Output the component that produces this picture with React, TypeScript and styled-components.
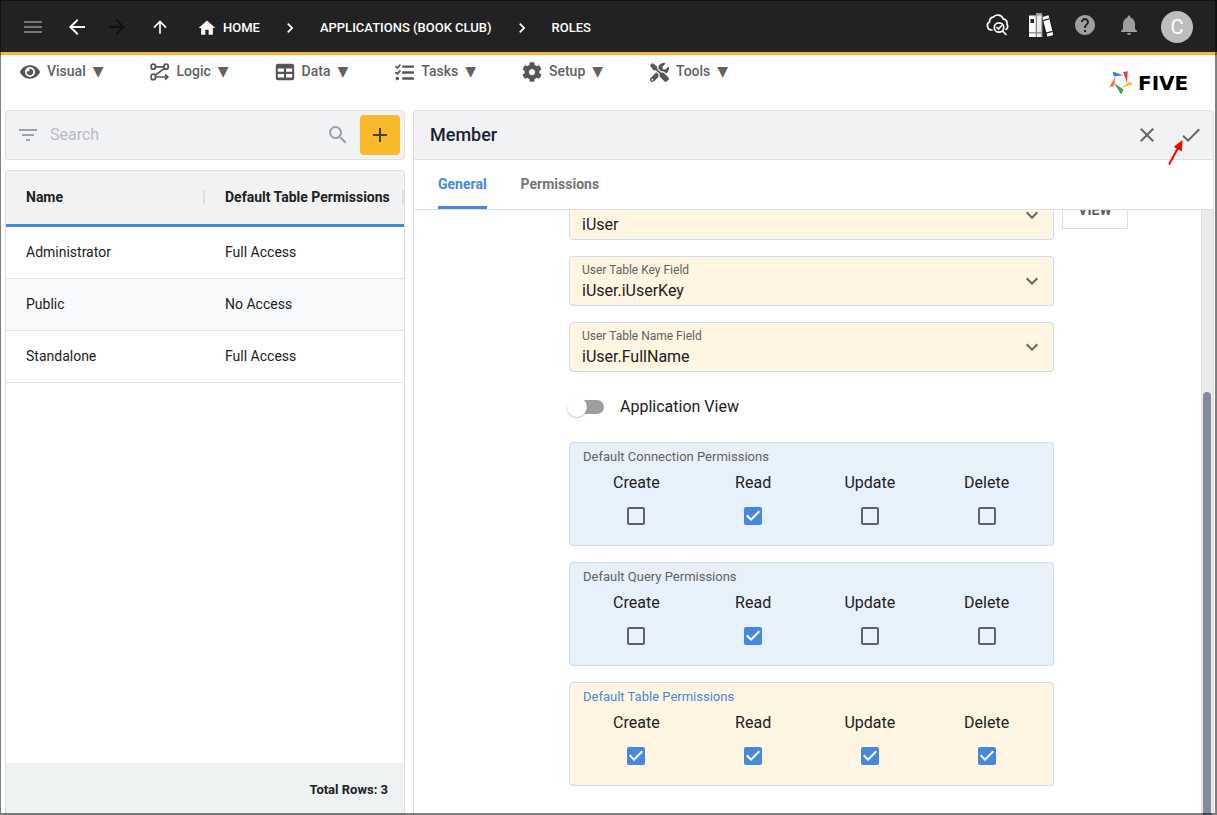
import React, { useId, useState } from "react";
import styled, { createGlobalStyle } from "styled-components";
import {
  MdAdd,
  MdArrowBack,
  MdArrowForward,
  MdArrowUpward,
  MdCheck,
  MdChevronRight,
  MdClose,
  MdExpandMore,
  MdFilterList,
  MdHelp,
  MdHome,
  MdMenu,
  MdNotifications,
  MdSearch,
} from "react-icons/md";
import { FaCog, FaEye, FaTasks, FaTools } from "react-icons/fa";

const color = {
  ink: "#212121",
  muted: "#616161",
  line: "#dcdee0",
  panel: "#f1f2f4",
  blue: "#4689dc",
  amber: "#f8b92b",
  cream: "#fff5e3",
  sky: "#e7f1fc",
  fieldLine: "#cbdcea",
};

const GlobalStyle = createGlobalStyle`
  *, *::before, *::after { box-sizing: border-box; }
  body {
    margin: 0;
    background: #fff;
    color: ${color.ink};
    font-family: Roboto, "Liberation Sans", sans-serif;
    font-size: 14px;
  }
  button, input, select { font: inherit; color: inherit; }
  svg { display: block; flex: none; }
`;

const Page = styled.div`
  position: relative;
  display: flex;
  flex-direction: column;
  height: 100vh;
  overflow: hidden;
`;

const Frame = styled.div`
  position: absolute;
  inset: 0;
  border: solid rgba(0, 0, 0, 0.5);
  border-width: 1px 2px 2px 1px;
  pointer-events: none;
`;

const TopBar = styled.header`
  display: flex;
  align-items: center;
  justify-content: space-between;
  flex: none;
  height: 55px;
  padding: 1px 24px 0 21px;
  background: #222;
  border-bottom: 3px solid ${color.amber};
  color: #fff;
`;

const TopGroup = styled.div`
  display: flex;
  align-items: center;
`;

const IconButton = styled.button<{ $tone?: string }>`
  display: flex;
  align-items: center;
  justify-content: center;
  width: 24px;
  height: 32px;
  padding: 0;
  border: 0;
  background: none;
  color: ${(p) => p.$tone ?? "inherit"};
  cursor: pointer;
`;

const HistoryButtons = styled.div`
  display: flex;
  gap: 16px;
  margin-left: 20px;
`;

const UpButton = styled(IconButton)`
  margin-left: 19px;
`;

const Crumbs = styled.nav`
  display: flex;
  align-items: center;
  margin-left: 25px;
  padding-top: 2px;
`;

const Crumb = styled.a`
  display: flex;
  align-items: center;
  gap: 6px;
  color: #fff;
  font-size: 13px;
  font-weight: 500;
  line-height: 20px;
  text-decoration: none;
  white-space: nowrap;
`;

const CrumbGap = styled.span`
  display: flex;
  justify-content: center;
  width: 60px;
`;

const Utilities = styled.div`
  display: flex;
  align-items: center;
  gap: 20px;
  padding-bottom: 4px;
`;

const Avatar = styled.button`
  width: 32px;
  height: 32px;
  margin-left: 20px;
  padding: 0;
  border: 0;
  border-radius: 50%;
  background: #bdbdbd;
  color: #fff;
  font-size: 20px;
  line-height: 32px;
`;

const MenuBar = styled.div`
  display: flex;
  justify-content: space-between;
  flex: none;
  height: 55px;
  padding: 0 20px;
`;

const Menus = styled.nav`
  display: flex;
  align-items: flex-start;
  gap: 46px;
`;

const MenuButton = styled.button`
  display: flex;
  align-items: center;
  gap: 7px;
  height: 34px;
  padding: 0;
  border: 0;
  background: none;
  color: ${color.muted};
  font-weight: 500;
  white-space: nowrap;
`;

const MenuLabel = styled.span`
  padding-bottom: 2px;
`;

const MenuCaret = styled.span`
  padding-bottom: 2px;
  font-family: "DejaVu Sans", sans-serif;
`;

const MenuIcon = styled.span`
  display: flex;
  justify-content: center;
  width: 20px;
  color: #555;
`;

const Brand = styled.a`
  display: flex;
  align-items: center;
  gap: 4px;
  width: 88px;
  height: 55px;
  color: #000;
  font-family: "DejaVu Sans", sans-serif;
  font-size: 20px;
  font-weight: 700;
  text-decoration: none;
`;

const Workspace = styled.main`
  display: flex;
  flex: 1;
  gap: 8px;
  min-height: 0;
  padding: 0 3px 0 5px;
`;

const ListPane = styled.section`
  display: flex;
  flex-direction: column;
  flex: 0 1 400px;
  gap: 10px;
`;

const SearchBar = styled.div`
  display: flex;
  align-items: center;
  height: 50px;
  padding: 0 4px 0 10px;
  border: 1px solid ${color.line};
  border-radius: 4px;
  background: ${color.panel};
`;

const SearchInput = styled.input`
  flex: 1;
  min-width: 0;
  margin: 0 10px;
  padding: 0 0 2px;
  border: 0;
  outline: 0;
  background: none;
  font-size: 16px;
  &::placeholder { color: #b9bcbf; opacity: 1; }
`;

const AddButton = styled.button`
  display: flex;
  align-items: center;
  justify-content: center;
  width: 40px;
  height: 40px;
  margin-left: 10px;
  padding: 0;
  border: 0;
  border-radius: 4px;
  background: ${color.amber};
  color: #424242;
`;

const TableCard = styled.div`
  display: flex;
  flex-direction: column;
  justify-content: space-between;
  flex: 1;
  overflow: hidden;
  border: 1px solid ${color.line};
  border-bottom: 0;
  border-radius: 4px 4px 0 0;
`;

const RoleTable = styled.table`
  width: 100%;
  table-layout: fixed;
  border-collapse: separate;
  border-spacing: 0;
`;

const HeadCell = styled.th`
  height: 56px;
  padding: 0 0 2px 20px;
  border-bottom: 3px solid ${color.blue};
  background: ${color.panel};
  font-weight: 700;
  text-align: left;
  white-space: nowrap;
`;

const HeadContent = styled.div`
  display: flex;
  align-items: center;
  justify-content: space-between;
  height: 14px;
  border-right: 2px solid ${color.line};
`;

const Row = styled.tr`
  &:nth-child(even) { background: #f8f9fb; }
`;

const Cell = styled.td`
  height: 52px;
  padding: 0 20px 2px;
  border-bottom: 1px solid #e4e5e7;
`;

const TableFooter = styled.div`
  height: 52px;
  padding: 1px 16px 0 0;
  background: #eff2f3;
  font-size: 13px;
  font-weight: 700;
  line-height: 52px;
  text-align: right;
`;

const DetailPane = styled.section`
  display: flex;
  flex-direction: column;
  flex: 1;
  min-width: 0;
  overflow: hidden;
  border: 1px solid ${color.line};
  border-bottom: 0;
  border-radius: 4px 4px 0 0;
`;

const DetailHeader = styled.div`
  display: flex;
  align-items: center;
  justify-content: space-between;
  flex: none;
  height: 49px;
  padding: 0 10px 0 16px;
  border-bottom: 1px solid ${color.line};
  background: ${color.panel};
`;

const DetailTitle = styled.h1`
  margin: 0;
  padding-bottom: 2px;
  color: #1b2230;
  font-size: 18px;
  font-weight: 500;
`;

const DetailActions = styled.div`
  position: relative;
  display: flex;
  gap: 20px;
`;

const Pointer = styled.svg`
  position: absolute;
  top: 19px;
  right: 18px;
`;

const Tabs = styled.div`
  display: flex;
  flex: none;
  gap: 34px;
  height: 50px;
  padding: 0 24px;
  border-bottom: 1px solid ${color.line};
`;

const Tab = styled.button<{ $active?: boolean }>`
  padding: 1px 0 0;
  border: 0;
  border-bottom: 3px solid ${(p) => (p.$active ? color.blue : "transparent")};
  border-radius: 2px 2px 0 0;
  background: none;
  color: ${(p) => (p.$active ? color.blue : "#757575")};
  font-weight: 700;
`;

const DetailBody = styled.div`
  display: flex;
  flex: 1;
  min-height: 0;
`;

/* Reversed column keeps the view anchored to the end of the form. */
const FormScroller = styled.div`
  display: flex;
  flex-direction: column-reverse;
  flex: 1;
  overflow-y: auto;
  scrollbar-width: none;
`;

const Form = styled.form`
  display: flex;
  flex-direction: column;
  gap: 16px;
  padding-bottom: 29px;
`;

const FormRow = styled.div`
  display: grid;
  grid-template-columns: minmax(66px, 1fr) minmax(0, 485px) minmax(66px, 1fr);
  column-gap: 8px;
  padding-left: 8px;
  & > :first-child { grid-column: 2; }
`;

const Field = styled.label`
  position: relative;
  display: flex;
  flex-direction: column;
  height: 50px;
  padding: 5px 12px 0;
  border: 1px solid ${color.fieldLine};
  border-radius: 4px;
  background: ${color.cream};
`;

const FieldLabel = styled.span`
  color: ${color.muted};
  font-size: 12px;
  line-height: 16px;
`;

const FieldSelect = styled.select`
  width: 100%;
  height: 24px;
  padding: 0;
  border: 0;
  outline: 0;
  appearance: none;
  background: none;
  font-size: 16px;
`;

const FieldArrow = styled(MdExpandMore)`
  position: absolute;
  top: 12px;
  right: 9px;
  color: #666;
  pointer-events: none;
`;

const ViewButton = styled.button`
  align-self: start;
  justify-self: start;
  width: 66px;
  height: 39px;
  padding: 0;
  border: 1px solid ${color.line};
  background: #fff;
  color: ${color.muted};
  font-size: 14px;
  font-weight: 700;
`;

const SwitchRow = styled.label`
  display: flex;
  align-items: center;
  gap: 16px;
  height: 38px;
  font-size: 16px;
`;

const SwitchText = styled.span`
  padding-bottom: 2px;
`;

const Switch = styled.input`
  appearance: none;
  display: flex;
  align-items: center;
  width: 34px;
  height: 14px;
  margin: 0 0 0 1px;
  border-radius: 7px;
  background: #9e9e9e;
  &::before {
    content: "";
    width: 20px;
    height: 20px;
    margin-left: -3px;
    flex: none;
    border-radius: 50%;
    background: #fff;
    box-shadow: 0 1px 2px rgba(0, 0, 0, 0.25);
  }
  &:checked { background: #a2c4ed; }
  &:checked::before { margin-left: 17px; background: ${color.blue}; }
`;

const PermissionBox = styled.div<{ $active?: boolean }>`
  height: 104px;
  padding: 5px 8px 0;
  border: 1px solid ${color.fieldLine};
  border-radius: 4px;
  background: ${(p) => (p.$active ? color.cream : color.sky)};
`;

const PermissionTitle = styled.div<{ $active?: boolean }>`
  padding-left: 5px;
  color: ${(p) => (p.$active ? color.blue : color.muted)};
  font-size: 13px;
  line-height: 18px;
`;

const PermissionGrid = styled.div`
  display: grid;
  grid-template-columns: repeat(4, 1fr);
`;

const PermissionItem = styled.label`
  display: flex;
  flex-direction: column;
  align-items: center;
  gap: 12px;
  padding-top: 5px;
  font-size: 16px;
  line-height: 24px;
`;

const CheckSlot = styled.span`
  display: grid;
  & > * { grid-area: 1 / 1; }
  & > svg { pointer-events: none; visibility: hidden; }
  & > input:checked + svg { visibility: visible; }
`;

const CheckInput = styled.input`
  appearance: none;
  width: 18px;
  height: 18px;
  margin: 0;
  border: 2px solid ${color.muted};
  border-radius: 2px;
  &:checked { border-color: ${color.blue}; background: ${color.blue}; }
`;

const ScrollTrack = styled.div`
  display: flex;
  flex-direction: column;
  justify-content: flex-end;
  flex: none;
  width: 12px;
  padding: 0 2px 0 1px;
  border-left: 1px solid ${color.line};
  background: #ebebeb;
`;

const ScrollThumb = styled.div`
  height: 70%;
  border-radius: 4px 4px 0 0;
  background: #828a9b;
`;

const LogicIcon = () => (
  <svg width="20" height="18" viewBox="0 0 20 18" fill="none" stroke="currentColor" strokeWidth="1.7">
    <rect x="1.2" y="1.2" width="4.2" height="5" rx="2" />
    <rect x="14" y="1.2" width="4.2" height="5" rx="2" />
    <rect x="1.2" y="11.200" width="4.2" height="5.500" rx="2" />
    <path d="M5.500 3.800h8.400M14.400 5.400 5.200 12.200M5.500 14h12M15 11.300l2.800 2.700-2.800 2.700" />
  </svg>
);

const DataIcon = () => (
  <svg width="20" height="18" viewBox="0 0 20 18">
    <path
      fill="currentColor"
      fillRule="evenodd"
      d="M3 .8h14a2.200 2.200 0 0 1 2.200 2.200v12a2.200 2.200 0 0 1-2.200 2.200H3A2.200 2.200 0 0 1 .8 15V3A2.200 2.200 0 0 1 3 .8zM2.800 5.600v3.200h6.200V5.600zM11 5.600v3.200h6.200V5.600zM2.800 10.900v3.700h6.200v-3.700zM11 10.900v3.700h6.200v-3.700z"
    />
  </svg>
);

const CloudSearchIcon = () => (
  <svg width="24" height="24" viewBox="0 0 24 24" fill="none" stroke="#fff" strokeWidth="1.700" strokeLinecap="round">
    <path d="M7 17H6.300A4.400 4.400 0 0 1 4.600 8.800a4 4 0 0 1 3.600-4.600 5.800 5.800 0 0 1 10 1.700 4.300 4.300 0 0 1 3.800 5.400 3.600 3.600 0 0 1-.9 5.100" />
    <circle cx="14" cy="14.500" r="4.700" />
    <path d="m12 14.500 1.500 1.500 2.700-3M17.500 18l3.500 3.500" />
  </svg>
);

const BooksIcon = () => (
  <svg width="26" height="26" viewBox="0 0 26 26">
    <path fill="#fff" d="M1 3.500h7V25H1zM14.300 5l6.200-1.700L25.300 23l-5.800 1.800z" />
    <path fill="#ececec" d="M8.300 1h5.600v24H8.300z" />
    <path fill="#9a9a9a" d="M8.300 1h5.600v2.500H8.300zM1 20h12.900v1.500H1z" />
    <path fill="#222" d="M2.500 7H6v4H2.500z" />
    <path stroke="#777" strokeWidth="1" fill="none" d="M8.200 3.500V25M14.100 3v22" />
    <path stroke="#222" strokeWidth="1.200" fill="none" d="M14.800 8.600l6.400-1.800M18 21.200l6.600-1.900" />
  </svg>
);

const BrandMark = () => (
  <svg width="25" height="25" viewBox="0 0 25 25">
    <path fill="#3d7fd6" d="M3.700 1.500 14.300 5.300 4.700 6.500z" />
    <path fill="#e8373e" d="M14.300 2.300 18.700 1l-.7 12z" />
    <path fill="#f8b92b" d="M11.800 18 20.600 11.800l3.400 2.400z" />
    <path fill="#35a853" d="M5 13l9.500 6.500L12.200 24.500z" />
    <path fill="#f47a2c" d="M6.500 6.500 5 16.200.2 17z" />
  </svg>
);

const menus = [
  { label: "Visual", icon: <FaEye size={20} /> },
  { label: "Logic", icon: <LogicIcon /> },
  { label: "Data", icon: <DataIcon /> },
  { label: "Tasks", icon: <FaTasks size={19} /> },
  { label: "Setup", icon: <FaCog size={20} /> },
  { label: "Tools", icon: <FaTools size={19} /> },
];

const roles = [
  ["Administrator", "Full Access"],
  ["Public", "No Access"],
  ["Standalone", "Full Access"],
];

const actions = ["Create", "Read", "Update", "Delete"];

function SelectField({ label, value }: { label: string; value: string }) {
  return (
    <Field>
      <FieldLabel>{label}</FieldLabel>
      <FieldSelect defaultValue={value}>
        <option>{value}</option>
      </FieldSelect>
      <FieldArrow size={24} />
    </Field>
  );
}

function Permissions({ title, granted, active }: { title: string; granted: string[]; active?: boolean }) {
  const id = useId();
  return (
    <FormRow>
      <PermissionBox role="group" aria-labelledby={id} $active={active}>
        <PermissionTitle id={id} $active={active}>{title}</PermissionTitle>
        <PermissionGrid>
          {actions.map((action) => (
            <PermissionItem key={action}>
              {action}
              <CheckSlot>
                <CheckInput type="checkbox" defaultChecked={granted.includes(action)} />
                <svg width="18" height="18" viewBox="3 3 18 18">
                  <path fill="#fff" d="M10 17l-5-5 1.410-1.410L10 14.170l7.590-7.590L19 8z" />
                </svg>
              </CheckSlot>
            </PermissionItem>
          ))}
        </PermissionGrid>
      </PermissionBox>
    </FormRow>
  );
}

export default function App() {
  const [tab, setTab] = useState("General");
  return (
    <Page>
      <GlobalStyle />
      <TopBar>
        <TopGroup>
          <IconButton aria-label="Menu" $tone="#757575"><MdMenu size={24} /></IconButton>
          <HistoryButtons>
            <IconButton aria-label="Back"><MdArrowBack size={24} /></IconButton>
            <IconButton aria-label="Forward" $tone="#111"><MdArrowForward size={24} /></IconButton>
          </HistoryButtons>
          <UpButton aria-label="Up"><MdArrowUpward size={20} /></UpButton>
          <Crumbs aria-label="Breadcrumb">
            <Crumb href="#home"><MdHome size={20} />HOME</Crumb>
            <CrumbGap><MdChevronRight size={20} /></CrumbGap>
            <Crumb href="#applications">APPLICATIONS (BOOK CLUB)</Crumb>
            <CrumbGap><MdChevronRight size={20} /></CrumbGap>
            <Crumb href="#roles">ROLES</Crumb>
          </Crumbs>
        </TopGroup>
        <TopGroup>
          <Utilities>
            <IconButton aria-label="Inspect"><CloudSearchIcon /></IconButton>
            <IconButton aria-label="Library"><BooksIcon /></IconButton>
            <IconButton aria-label="Help" $tone="#9e9e9e"><MdHelp size={24} /></IconButton>
            <IconButton aria-label="Notifications" $tone="#9e9e9e"><MdNotifications size={24} /></IconButton>
          </Utilities>
          <Avatar aria-label="Account">C</Avatar>
        </TopGroup>
      </TopBar>

      <MenuBar>
        <Menus>
          {menus.map((m) => (
            <MenuButton key={m.label}>
              <MenuIcon>{m.icon}</MenuIcon>
              <MenuLabel>{m.label}</MenuLabel>
              <MenuCaret>▼</MenuCaret>
            </MenuButton>
          ))}
        </Menus>
        <Brand href="#five"><BrandMark />FIVE</Brand>
      </MenuBar>

      <Workspace>
        <ListPane>
          <SearchBar>
            <MdFilterList size={24} color="#9aa5ab" />
            <SearchInput type="search" placeholder="Search" aria-label="Search" />
            <MdSearch size={24} color="#9aa0a4" />
            <AddButton aria-label="Add"><MdAdd size={24} /></AddButton>
          </SearchBar>
          <TableCard>
            <RoleTable>
              <thead>
                <tr>
                  <HeadCell><HeadContent>Name</HeadContent></HeadCell>
                  <HeadCell><HeadContent>Default Table Permissions</HeadContent></HeadCell>
                </tr>
              </thead>
              <tbody>
                {roles.map(([name, access]) => (
                  <Row key={name}>
                    <Cell>{name}</Cell>
                    <Cell>{access}</Cell>
                  </Row>
                ))}
              </tbody>
            </RoleTable>
            <TableFooter>Total Rows: 3</TableFooter>
          </TableCard>
        </ListPane>

        <DetailPane>
          <DetailHeader>
            <DetailTitle>Member</DetailTitle>
            <DetailActions>
              <IconButton aria-label="Cancel" $tone="#666"><MdClose size={24} /></IconButton>
              <IconButton aria-label="Save" $tone="#666"><MdCheck size={24} /></IconButton>
              <Pointer width="18" height="28" viewBox="0 0 18 28">
                <path d="M2 26.500 11 10" stroke="#f00" strokeWidth="2" />
                <path d="M15.500 2 14.800 13.500 6.800 8.700z" fill="#f00" />
              </Pointer>
            </DetailActions>
          </DetailHeader>
          <Tabs role="tablist">
            {["General", "Permissions"].map((name) => (
              <Tab key={name} role="tab" aria-selected={tab === name} $active={tab === name} onClick={() => setTab(name)}>
                {name}
              </Tab>
            ))}
          </Tabs>
          <DetailBody>
            <FormScroller>
              <Form>
                <FormRow>
                  <SelectField label="User Table" value="iUser" />
                  <ViewButton type="button">VIEW</ViewButton>
                </FormRow>
                <FormRow><SelectField label="User Table Key Field" value="iUser.iUserKey" /></FormRow>
                <FormRow><SelectField label="User Table Name Field" value="iUser.FullName" /></FormRow>
                <FormRow>
                  <SwitchRow>
                    <Switch type="checkbox" role="switch" />
                    <SwitchText>Application View</SwitchText>
                  </SwitchRow>
                </FormRow>
                <Permissions title="Default Connection Permissions" granted={["Read"]} />
                <Permissions title="Default Query Permissions" granted={["Read"]} />
                <Permissions title="Default Table Permissions" granted={actions} active />
              </Form>
            </FormScroller>
            <ScrollTrack><ScrollThumb /></ScrollTrack>
          </DetailBody>
        </DetailPane>
      </Workspace>
      <Frame />
    </Page>
  );
}
